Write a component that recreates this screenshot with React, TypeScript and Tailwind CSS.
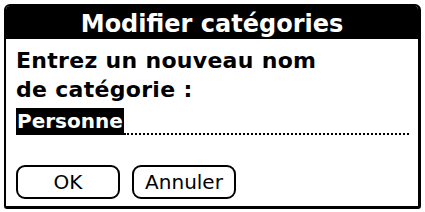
export default function App() {
  return (
    <div className="w-[425px] h-[212px] bg-white pl-[4px] pt-[4px]" style={{ fontFamily: '"DejaVu Sans", sans-serif' }}>
      <div className="w-[417px] h-[205px] border-l-2 border-t-2 border-r-[3px] border-b-[3px] border-black rounded-t-[6px] rounded-b-[3px] flex flex-col overflow-hidden">
        <div className="h-[33px] bg-black flex items-center justify-center pt-[3px]">
          <span className="text-white font-bold text-[24px] leading-none">Modifier catégories</span>
        </div>
        <div className="flex-1 flex flex-col pl-[10px] pr-[9px] pt-[7px]">
          <p className="font-bold text-[22px] leading-[29px] tracking-[0.3px] text-black">
            Entrez un nouveau nom
            <br />
            de catégorie :
          </p>
          <div className="flex items-end mt-[4px]">
            <span className="bg-black text-white font-bold text-[20px] leading-[27px] px-[1px]">Personne</span>
            <div className="flex-1 border-b-2 border-dotted border-black" />
          </div>
          <div className="flex gap-[12px] mt-[30px]">
            <button className="w-[104px] h-[34px] border-2 border-black rounded-[9px] text-[20px] leading-none text-black">OK</button>
            <button className="w-[104px] h-[34px] border-2 border-black rounded-[9px] text-[20px] leading-none text-black">Annuler</button>
          </div>
        </div>
      </div>
    </div>
  );
}
